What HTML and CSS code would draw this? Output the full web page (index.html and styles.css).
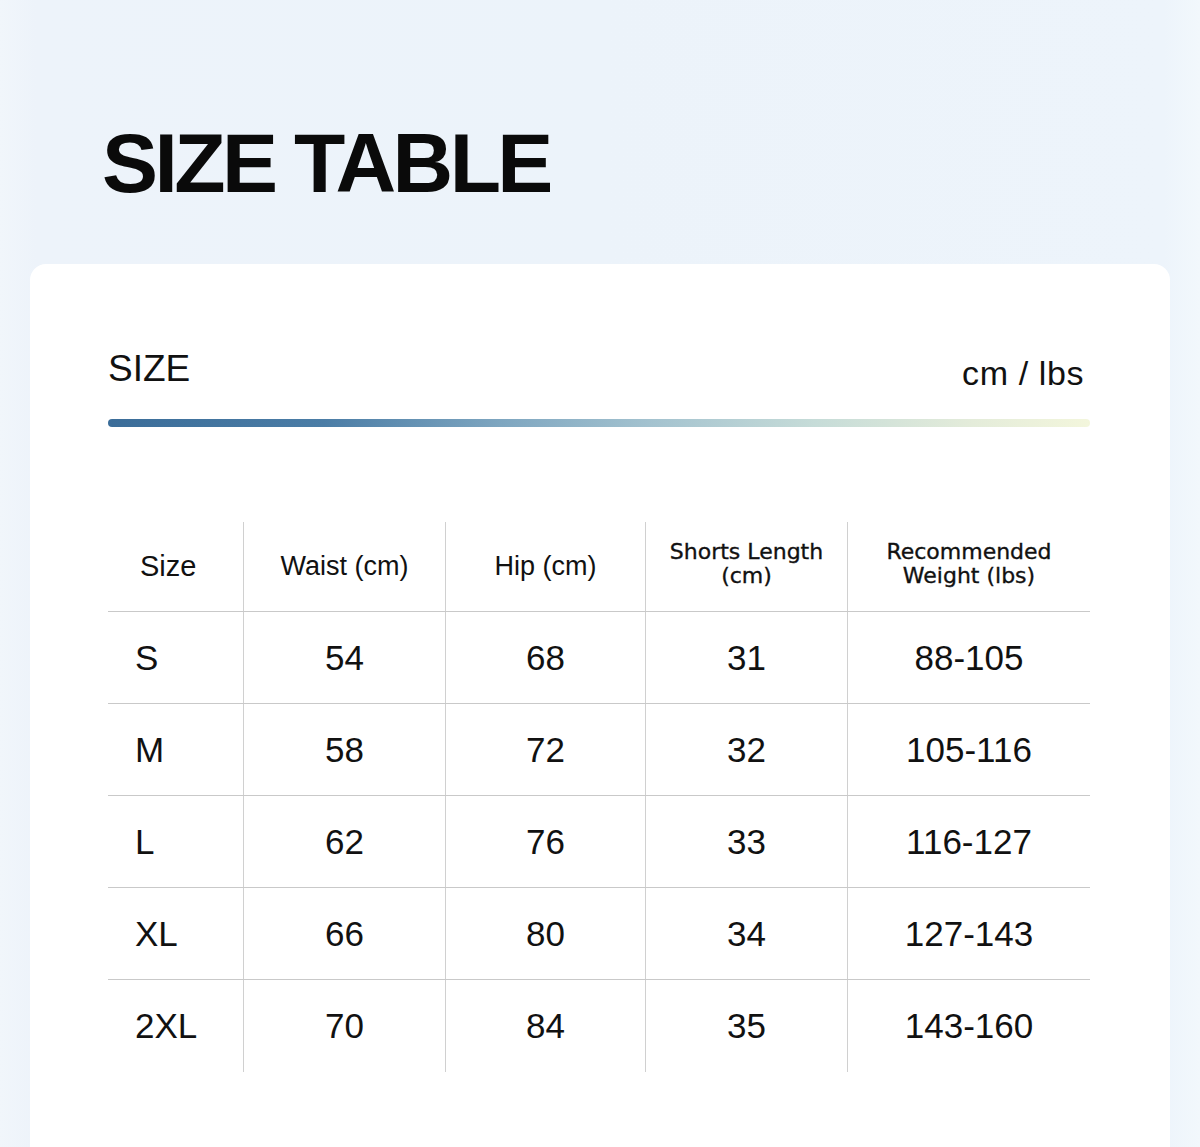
FILE: index.html
```html
<!DOCTYPE html>
<html lang="en">
<head>
<meta charset="utf-8">
<title>Size Table</title>
<link rel="stylesheet" href="styles.css">
</head>
<body>
<div class="page">
  <h1 class="title">SIZE TABLE</h1>
  <div class="card">
    <div class="card-head">
      <div class="label">SIZE</div>
      <div class="units">cm / lbs</div>
    </div>
    <div class="bar"></div>
    <div class="table">
      <div class="row head">
        <div class="cell first">Size</div>
        <div class="cell">Waist (cm)</div>
        <div class="cell">Hip (cm)</div>
        <div class="cell two">Shorts Length<br>(cm)</div>
        <div class="cell two">Recommended<br>Weight (lbs)</div>
      </div>
      <div class="row">
        <div class="cell first">S</div>
        <div class="cell">54</div>
        <div class="cell">68</div>
        <div class="cell">31</div>
        <div class="cell">88-105</div>
      </div>
      <div class="row">
        <div class="cell first">M</div>
        <div class="cell">58</div>
        <div class="cell">72</div>
        <div class="cell">32</div>
        <div class="cell">105-116</div>
      </div>
      <div class="row">
        <div class="cell first">L</div>
        <div class="cell">62</div>
        <div class="cell">76</div>
        <div class="cell">33</div>
        <div class="cell">116-127</div>
      </div>
      <div class="row">
        <div class="cell first">XL</div>
        <div class="cell">66</div>
        <div class="cell">80</div>
        <div class="cell">34</div>
        <div class="cell">127-143</div>
      </div>
      <div class="row last">
        <div class="cell first">2XL</div>
        <div class="cell">70</div>
        <div class="cell">84</div>
        <div class="cell">35</div>
        <div class="cell">143-160</div>
      </div>
    </div>
  </div>
</div>
</body>
</html>
```

FILE: styles.css
```css
html, body {
  margin: 0;
  padding: 0;
}
body {
  background: linear-gradient(90deg, #f1f6fb 0%, #edf3fa 3%, #ecf3fa 50%, #edf4fb 97%, #f2f8fc 100%);
  font-family: "Liberation Sans", Arial, sans-serif;
  color: #111;
  overflow: hidden;
  height: 1147px;
}
.page {
  padding-top: 121px;
}
.title {
  margin: 0 0 59px 102px;
  font-size: 84px;
  line-height: 1;
  font-weight: 700;
  letter-spacing: -3.6px;
  color: #0a0a0a;
}
.card {
  margin-left: 30px;
  width: 1140px;
  box-sizing: border-box;
  background: #fff;
  border-radius: 16px 16px 0 0;
  padding: 86px 80px 120px 78px;
}
.card-head {
  display: flex;
  justify-content: space-between;
  align-items: flex-start;
}
.label {
  font-size: 37px;
  line-height: 1;
}
.units {
  font-size: 34px;
  line-height: 1;
  margin-top: 6px;
  margin-right: 6px;
  letter-spacing: 0.6px;
}
.bar {
  margin-top: 29px;
  height: 8px;
  border-radius: 4px;
  background: linear-gradient(90deg, #3b6d99 0%, #4b7da6 22%, #7ea6c0 40%, #a3c2cf 55%, #c6dcd8 72%, #e4ecda 88%, #f3f6dc 100%);
}
.table {
  margin-top: 95px;
}
.row {
  display: grid;
  grid-template-columns: 135px 202px 200px 202px 243px;
  height: 92px;
  box-sizing: border-box;
  border-bottom: 1.5px solid #c9c9c9;
}
.row.head {
  height: 90px;
}
.row.last {
  border-bottom: none;
}
.cell {
  display: flex;
  align-items: center;
  justify-content: center;
  text-align: center;
  font-size: 35px;
  border-left: 1px solid #d0d0d0;
}
.cell.first {
  border-left: none;
  justify-content: flex-start;
  padding-left: 27px;
}
.head .cell {
  font-size: 27px;
}
.head .cell.first {
  padding-left: 32px;
  font-size: 29px;
}
.head .cell.two {
  font-family: "DejaVu Sans", "Liberation Sans", sans-serif;
  font-size: 22px;
  line-height: 24px;
  padding-bottom: 6px;
  color: #111;
  -webkit-text-stroke: 0.35px #111;
}
```
